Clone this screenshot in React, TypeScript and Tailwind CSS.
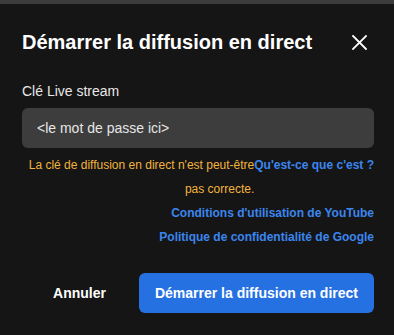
export default function App() {
  return (
    <div
      className="w-[394px] h-[335px] bg-[#151515] flex flex-col overflow-hidden"
      style={{ fontFamily: '"Liberation Sans", Arial, sans-serif' }}
    >
      <div className="h-[4px] bg-[#3c3c3c]" />

      <div className="flex flex-col pl-[22px] pr-[20px] pt-[24px]">
        {/* Header */}
        <div className="flex items-center justify-between h-[28px]">
          <h2 className="text-[20px] leading-[28px] font-bold text-white">
            Démarrer la diffusion en direct
          </h2>
          <button className="mr-[7px] text-white" aria-label="Fermer">
            <svg width="15" height="15" viewBox="0 0 15 15" fill="none">
              <path d="M1 1L14 14M14 1L1 14" stroke="currentColor" strokeWidth="1.8" strokeLinecap="square" />
            </svg>
          </button>
        </div>

        {/* Field */}
        <label className="mt-[25px] text-[14px] leading-[20px] text-[#e8e8e8]">Clé Live stream</label>
        <div className="mt-[7px] h-[40px] rounded-[6px] bg-[#3d3d3d] flex items-center pl-[15px] text-[14px] text-[#e6e6e6]">
          &lt;le mot de passe ici&gt;
        </div>

        {/* Warning */}
        <div className="mt-[5px] flex justify-end items-start text-[12px] leading-[24px]">
          <p className="min-w-0 text-right text-[#f2b33d]">
            La clé de diffusion en direct n'est peut-être pas correcte.
          </p>
          <a className="shrink-0 font-bold text-[#3b86ee]">Qu'est-ce que c'est ?</a>
        </div>

        <div className="flex flex-col items-end text-[12px] leading-[24px] font-bold text-[#3b86ee]">
          <a>Conditions d'utilisation de YouTube</a>
          <a>Politique de confidentialité de Google</a>
        </div>

        {/* Actions */}
        <div className="mt-[24px] flex items-center justify-end gap-[17px]">
          <button className="h-[40px] px-4 text-[14px] font-bold text-white">Annuler</button>
          <button className="h-[40px] px-4 rounded-[6px] bg-[#2571e1] text-[14px] font-bold text-white">
            Démarrer la diffusion en direct
          </button>
        </div>
      </div>
    </div>
  );
}
